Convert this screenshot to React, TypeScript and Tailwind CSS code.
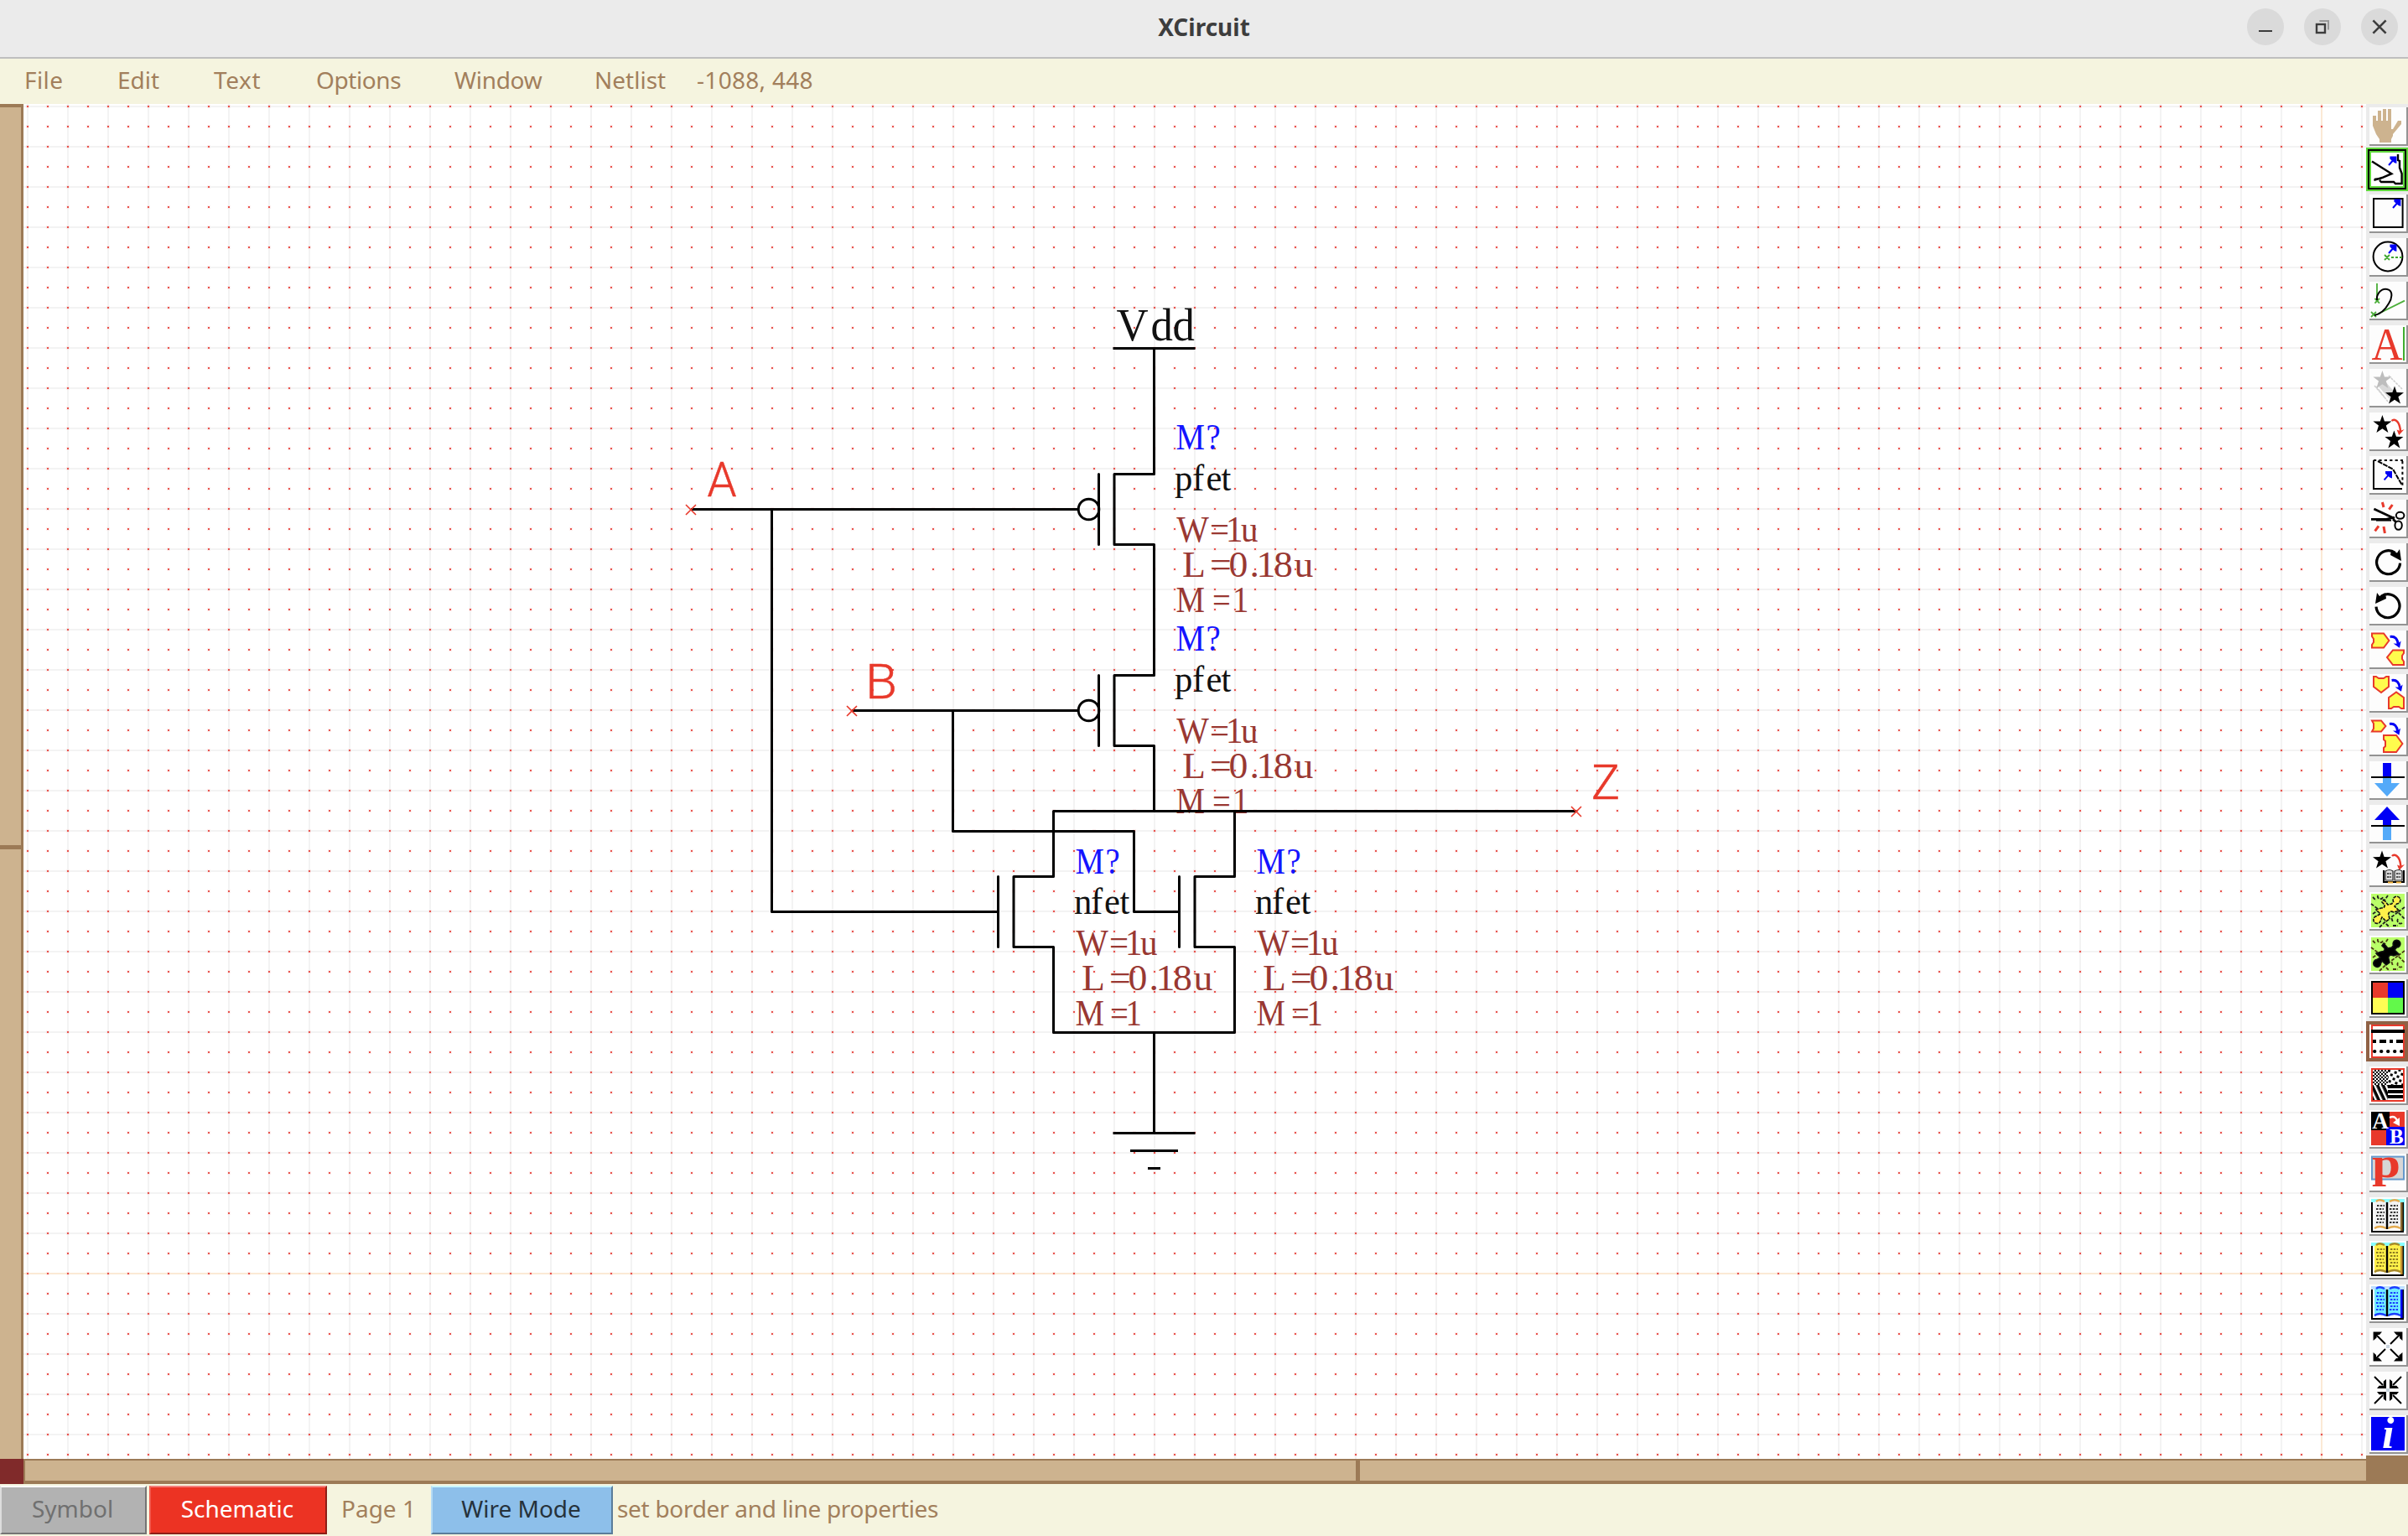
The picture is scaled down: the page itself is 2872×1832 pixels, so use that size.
import type { ReactNode } from "react";

const SERIF = "'Liberation Serif', serif";
const BLACK = "#000";
const BLUE = "#1414ff";
const RED = "#e8392b";
const RUST = "#993832";

/* ---------- schematic canvas ---------- */

type LabelProps = { text: string; xs: number[]; y: number; color: string; size?: number; squeeze?: number };

function Label({ text, xs, y, color, size = 44, squeeze = 0.93 }: LabelProps) {
  return (
    <text
      transform={`scale(${squeeze} 1)`}
      x={xs.map((v) => (v / squeeze).toFixed(1)).join(" ")}
      y={y}
      fontSize={size}
      fontFamily={SERIF}
      fill={color}
    >
      {text}
    </text>
  );
}

type FetProps = { x: number; y: number; kind: "p" | "n" };

function Fet({ x, y, kind }: FetProps) {
  const p = kind === "p";
  const at = (...v: number[]) => v.map((n) => x + n);
  return (
    <g>
      <g fill="none" stroke={BLACK} strokeWidth="3" strokeLinejoin="round" strokeLinecap="round">
        <path d={`M${x} ${y - 42}h-47.5v84h47.5M${x - 66} ${y - 42}v84`} />
        {p && <circle cx={x - 78} cy={y} r="12.3" />}
      </g>
      <Label text="M?" xs={at(26, 62)} y={y + (p ? -71 : -45)} color={BLUE} squeeze={0.88} />
      <Label
        text={p ? "pfet" : "nfet"}
        xs={p ? at(24.6, 45.5, 62, 80) : at(24.6, 44.5, 60.5, 79)}
        y={y + (p ? -22.5 : 3)}
        color="#111"
        squeeze={0.97}
      />
      <Label text="W=1u" xs={at(26.7, 66.500, 85.5, 103.5)} y={y + (p ? 39 : 51.5)} color={RUST} />
      <Label
        text="L =0.18u"
        xs={at(33.5, 57, 66.500, 89, 114, 122, 142.5, 167)}
        y={y + (p ? 81 : 93.5)}
        color={RUST}
        squeeze={1.04}
      />
      <Label
        text="M=1"
        xs={p ? at(26, 69.5, 93.5) : at(26, 67.5, 86)}
        y={y + (p ? 123 : 136)}
        color={RUST}
        squeeze={0.88}
      />
    </g>
  );
}

function Pin({ x, y, name, tx, ty, w }: { x: number; y: number; name: string; tx: number; ty: number; w: number }) {
  return (
    <g>
      <path d={`M${x - 6} ${y - 6}l12 12m0 -12l-12 12`} stroke={RED} strokeWidth="1.6" />
      <text x={tx} y={ty} fontSize="57" fontWeight="300" fontFamily="Roboto, sans-serif" fill={RED} stroke={RED} strokeWidth="0.5" textLength={w} lengthAdjust="spacingAndGlyphs">
        {name}
      </text>
    </g>
  );
}

function Schematic() {
  return (
    <svg className="block h-[1616px] w-[2794px] bg-white" viewBox="28 124 2794 1616">
      <defs>
        <pattern id="lines" x="32" y="126" width="48" height="48" patternUnits="userSpaceOnUse">
          <path d="M0 0h48v2h-48zM0 0h2v48h-2z" fill="#f3f3f3" />
        </pattern>
        <pattern id="dots" x="31" y="125" width="24" height="24" patternUnits="userSpaceOnUse">
          <rect width="4" height="4" fill="#f6b0ad" fillOpacity="0.2" />
          <rect x="1" y="1" width="2" height="2" fill="#e8544e" />
        </pattern>
      </defs>
      <rect x="28" y="124" width="2794" height="1616" fill="url(#lines)" />
      <path d="M2768 124h2v1616h-2zM28 1518h2794v2h-2794z" fill="#fbe9d5" />
      <rect x="28" y="124" width="2794" height="1616" fill="url(#dots)" />

      <Fet x={1376.5} y={607.5} kind="p" />
      <Fet x={1376.5} y={847.5} kind="p" />
      <Fet x={1256.5} y={1087.5} kind="n" />
      <Fet x={1472.5} y={1087.5} kind="n" />

      <g fill="none" stroke={BLACK} strokeWidth="3" strokeLinejoin="round">
        <path d="M1327.500 415.500h98M1376.500 415.500v150M1376.500 649.500v156M1376.500 889.500v78" />
        <path d="M824 607.500h462M920.500 607.500v480h270" />
        <path d="M1016 847.500h270M1136.500 847.500v144h216v96h54" />
        <path d="M1880 967.500h-623.500v78M1472.500 967.500v78" />
        <path d="M1256.500 1129.500v102h216v-102M1376.500 1231.500v120" />
        <path d="M1327.500 1351.500h98M1348 1372.500h57M1369 1393.500h15" />
      </g>
      <Label text="Vdd" xs={[1331.5, 1372.5, 1398.5]} y={406.5} size={55} color="#111" squeeze={0.96} />
      <Pin x={824} y={608} name="A" tx={843.5} ty={592} w={35} />
      <Pin x={1016} y={848} name="B" tx={1032} ty={832.5} w={38} />
      <Pin x={1880} y={968} name="Z" tx={1898} ty={952.5} w={34} />
    </svg>
  );
}

/* ---------- toolbar icons, drawn on a 20 x 20 grid ---------- */

const STAR = "M0 -5.500L1.300 -1.800L5.500 -1.700L2.200 .8L3.500 5L0 2.600L-3.500 5L-2.200 .8L-5.500 -1.700L-1.300 -1.800Z";

function Star({ x, y, fill = BLACK }: { x: number; y: number; fill?: string }) {
  return <path d={STAR} transform={`translate(${x} ${y})`} fill={fill} />;
}

function Arrow({ x, y }: { x: number; y: number }) {
  return (
    <g transform={`translate(${x} ${y})`}>
      <path d="M0 0l-4 4.500" stroke="#0000f5" strokeWidth="1" />
      <path d="M.7 -.7v4.200l-1.400 -.5l-2.600 -2.300v-1.400z" fill="#0000f5" />
    </g>
  );
}

function Swoop({ x, y, color }: { x: number; y: number; color: string }) {
  return (
    <g transform={`translate(${x} ${y})`}>
      <path d="M0 .5C3 0 4.500 2 4.800 5" stroke={color} strokeWidth="1.500" fill="none" />
      <path d="M2 4.500L5.700 7.200L6.500 3L4.700 4.700Z" fill={color} />
    </g>
  );
}

function RedSwoop({ x, y }: { x: number; y: number }) {
  return (
    <g transform={`translate(${x} ${y})`}>
      <path d="M0 1C1 -.2 4.500 0 5.200 7" stroke={RED} strokeWidth="1.200" fill="none" />
      <path d="M3 6.300L4.300 9.500L7.500 6L5 7Z" fill={RED} />
    </g>
  );
}

const TAG = { fill: "#fffb4d", stroke: RED, strokeWidth: 1 };

function Puzzle({ fill, dark }: { fill: string; dark?: boolean }) {
  return (
    <g>
      <rect width="20" height="20" fill="#baff69" />
      <path
        d="M0 6l4 3M1 12l3 -2M5 20l3 -3l3 3M20 8l-4 3l4 4M16 11l-4 3l1 3M16 15a1.800 1.800 0 1 0 3 2M4 1a1.500 1.500 0 1 0 3 1M10 1l-2 3M1 2l2 2M13 19l3 0"
        fill="none"
        stroke={dark ? "#4a3a14" : "#222"}
        strokeWidth=".9"
        strokeDasharray="2 .8"
      />
      <path
        d="M7.500 3.500L10 6.500L12.300 6L13.300 4.800A2.200 2.200 0 1 1 15.300 6L14 7.500L16.500 10L13.500 11Q11 9.800 10.300 12L11 15L9 16.500L6.500 14L5.800 15.500A2.200 2.200 0 1 1 3.300 13.300L5.500 12L3 9.500L6 8.500Q8.500 8.500 8 6.500L6.500 5Z"
        fill={fill}
        stroke="#111"
        strokeWidth=".8"
        strokeDasharray={dark ? undefined : "2 .5"}
      />
    </g>
  );
}

function Book({ page, ink, rim, cover, edge }: { page: string; ink: string; rim: string; cover: string; edge: string }) {
  return (
    <g>
      <rect x="0" y="0" width="20" height="2" fill={rim} />
      <rect x="18" y="1" width="2" height="18" fill={rim} />
      <path d="M.5 2v17.500h18.500v-17.500" fill="#fff" stroke={BLACK} />
      <path d="M17.500 2h1.300v17h-1.300z" fill={edge} />
      <path d="M2 2Q5 -.5 9 2V18Q5 16 2 18ZM10 2Q14 -.5 17.500 2V18Q14 16 10 18Z" fill={page} />
      <path d="M2 17.500Q5 15.500 9 17.500M10 17.500Q14 15.500 17.500 17.500M3 1.500Q5 -.2 8 1.500M11 1.500Q14 -.2 17 1.500" fill="none" stroke={cover} strokeWidth="1.200" />
      <path d="M9.500 2v16" stroke={BLACK} strokeWidth="1.200" />
      <path
        d="M3.500 4h4.500M3 6h4.500M3.500 8h4.500M3 10h4.500M3.500 12h4.500M3 14h4.500M11.500 4h4.500M11 6h5M11.500 8h4.500M11 10h5M11.500 12h4.500M11 14h5"
        stroke={ink}
        strokeWidth="1"
        strokeDasharray="1.200 .7"
      />
      <path d="M1 19.500h7M11 19.500h7" stroke={BLACK} strokeWidth="1" />
    </g>
  );
}

const ZOOM_ARM_OUT = "M-1.500 -1.500L-7 -7";
const ZOOM_HEAD_OUT = "M-8.700 -8.700h5.200l-1.500 1.700h-1.700v1.700l-2 1.800z";
const ZOOM_ARM_IN = "M-8 -8L-3 -3";
const ZOOM_HEAD_IN = "M-1 -1v-5.500l-1.600 1.300v2.600h-2.600l-1.300 1.600z";

function Spokes({ arm, head }: { arm: string; head: string }) {
  return (
    <g>
      {[0, 90, 180, 270].map((a) => (
        <g key={a} transform={`translate(10 10) rotate(${a})`}>
          <path d={arm} stroke={BLACK} strokeWidth="1" />
          <path d={head} fill={BLACK} />
        </g>
      ))}
      <rect x="9" y="9" width="2" height="2" fill="#c9d4de" />
    </g>
  );
}

const line = { fill: "none", stroke: BLACK, strokeWidth: 1 };

const ICONS: { id: string; art: ReactNode }[] = [
  { id: "pan", art: <path d="M1 4H3V7H4V1H6V7H7V0H9V7H10V0H12V12H13L16 7H18V9L13 15V16L12 18V20H5V18L3 15L1 10Z" fill="#cdb38f" /> },
  {
    id: "wire",
    art: (
      <g>
        <path d="M1 5.200L12.700 12.600L7 15L2.200 16.400M2.500 16l4 -.6M5.500 16.500l1 1H14l1 1H18.800V12.500L17.500 9V5L16.500 4.500V1" {...line} strokeWidth="1.200" />
        <Arrow x={15} y={3} />
      </g>
    ),
  },
  { id: "box", art: <g><rect x="1.500" y="1.500" width="17.300" height="17" {...line} /><Arrow x={17} y={2.500} /></g> },
  {
    id: "arc",
    art: (
      <g>
        <circle cx="10" cy="10" r="8.700" {...line} />
        <path d="M8 9l3 3m0 -3l-3 3M12 10.500h1.500m1 0h1.500m1 0h1.500" stroke="#3fa62f" strokeWidth=".9" />
        <Arrow x={14.5} y={3.5} />
      </g>
    ),
  },
  {
    id: "spline",
    art: (
      <g>
        <path d="M3.500 0V8M2.200 9l2.800 2.800m0 -2.800l-2.800 2.800M0 17l3 3m0 -3l-3 3M3.500 18.500L20 10.300" stroke="#4caf3a" strokeWidth=".9" fill="none" />
        <path d="M3.500 10V8C5 3.500 8 2.800 10.500 3.800C13 5 12.500 9 10.500 12C8.500 15.500 6 18.300 2 19" {...line} />
      </g>
    ),
  },
  {
    id: "text",
    art: (
      <g>
        <text x=".3" y="19.500" fontFamily={SERIF} fontSize="27.500" fill={RED} textLength="18.500" lengthAdjust="spacingAndGlyphs">A</text>
        <path d="M19.500 0V20" stroke="#3fae2f" strokeWidth="1" />
      </g>
    ),
  },
  {
    id: "copy",
    art: (
      <g>
        <path d="M10.500 3l8 8M3 9.500l7 9M2 9l6 7" stroke="#cfcfcf" strokeWidth=".8" strokeDasharray="1.500 .5" />
        <path d="M8 6L15 14L11 17L4 9Z" fill="#d9d9d9" />
        <Star x={6.7} y={5.5} fill="#bdbdbd" />
        <Star x={14} y={14.8} />
      </g>
    ),
  },
  { id: "move", art: <g><Star x={6.7} y={6} /><Star x={13.7} y={15.200} /><RedSwoop x={12.3} y={3} /></g> },
  {
    id: "edit",
    art: (
      <g>
        <path d="M1.500 1.500V18.500H18.500" {...line} />
        <path d="M1.500 1.500H19M18.700 2V18" {...line} strokeDasharray="1.600 1.600" />
        <path d="M4 2L13 6.800L18.300 16" {...line} strokeDasharray="3 .5" />
        <Arrow x={11.8} y={8.7} />
      </g>
    ),
  },
  {
    id: "cut",
    art: (
      <g>
        <path d="M1.700 4.500L14 10.300M0 10.700H9L14 9.500M13 10.500l2 2" {...line} strokeWidth="1.400" />
        <path d="M3 11.300h9" stroke={BLACK} strokeWidth="1" />
        <ellipse cx="17.300" cy="8.400" rx="2.400" ry="2" {...line} />
        <ellipse cx="16.300" cy="14.300" rx="2.100" ry="2.600" {...line} />
        <path d="M6.700 .5l.8 3M12.700 2l-2 2.800M4.500 14.700l-2.200 3M7.500 15l.7 4" stroke={RED} strokeWidth="1.500" />
      </g>
    ),
  },
  {
    id: "rotate-cw",
    art: (
      <g>
        <path d="M17.300 10.800A7 7 0 1 1 14.300 4.600" {...line} strokeWidth="1.600" />
        <path d="M11.500 6L18 9.500L17 2.500L15.500 4.700L12 3Z" fill={BLACK} />
      </g>
    ),
  },
  {
    id: "rotate-ccw",
    art: (
      <g>
        <path d="M3 10.800A7 7 0 1 0 6 4.600" {...line} strokeWidth="1.600" />
        <path d="M9 6L2.500 9L3.500 2.500L5 4.500L8.500 2.600Z" fill={BLACK} />
      </g>
    ),
  },
  {
    id: "flip-x",
    art: (
      <g>
        <path d="M.5 .7H7.500L10.700 5L7.500 9.300H.5V7.500L1.500 6V4L.5 2.500Z" {...TAG} />
        <path d="M19.500 10.700H13L9.500 15L13 19.500H19.500V17.500L18.500 16V14L19.500 12.500Z" {...TAG} />
        <Swoop x={11.3} y={2.2} color="#0000f5" />
      </g>
    ),
  },
  {
    id: "flip-y",
    art: (
      <g>
        <path d="M1.500 .5H3L4.500 1.500H7.500L9 .5H10.500V6.500L6 10L1.500 6.500Z" {...TAG} />
        <path d="M10.500 19.500H12L13.500 18.500H16.500L18 19.500H19.500V13L15 9.700L10.500 13Z" {...TAG} />
        <Swoop x={12.3} y={2.2} color="#0000f5" />
      </g>
    ),
  },
  {
    id: "rescale",
    art: (
      <g>
        <path d="M.5 .7H6L8.700 4L6 7.300H.5L1.500 5.500V2.500Z" {...TAG} />
        <path d="M7.500 9.500H15L18.700 14.500L15 19.500H7.500V17L8.500 16V13L7.500 12Z" {...TAG} />
        <Swoop x={11} y={2.2} color="#0000f5" />
      </g>
    ),
  },
  {
    id: "push",
    art: (
      <g>
        <path d="M7 0h5v8h-5z" fill="#0000f5" />
        <path d="M7 9h5v3h5L9.500 20L2 12h5z" fill="#54aaf9" />
        <path d="M0 8.500H20" stroke={BLACK} />
      </g>
    ),
  },
  {
    id: "pop",
    art: (
      <g>
        <path d="M9.500 0L17 8H12V11H7V8H2Z" fill="#0000f5" />
        <path d="M7 12h5v8h-5z" fill="#54aaf9" />
        <path d="M0 11.500H20" stroke={BLACK} />
      </g>
    ),
  },
  {
    id: "make-object",
    art: (
      <g>
        <Star x={6.5} y={5.8} />
        <RedSwoop x={12.5} y={2.5} />
        <path d="M7.500 12v7h12v-7" fill="#fff" stroke={BLACK} />
        <path d="M8.500 12.500Q11 11 13 12.500V18H8.500ZM14 12.500Q16.500 11 18.500 12.500V18H14Z" fill="#ddd" stroke="#222" strokeWidth=".6" />
        <path d="M9.500 14h2.500M9.500 16h2.500M15 14h2.500M15 16h2.500" stroke="#222" strokeWidth=".7" strokeDasharray="1.300 .4" />
        <path d="M10 19.300h3M15 19.300h3" stroke="#f0b23c" strokeWidth="1" />
      </g>
    ),
  },
  { id: "join", art: <Puzzle fill="#fff04a" /> },
  { id: "unjoin", art: <Puzzle fill="#000" dark /> },
  {
    id: "colors",
    art: (
      <g>
        <rect width="20" height="20" fill={BLACK} />
        <path d="M1 1h9v9h-9z" fill={RED} />
        <path d="M10 1h9v9h-9z" fill="#0000f5" />
        <path d="M1 10h9v9h-9z" fill="#fffd54" />
        <path d="M10 10h9v9h-9z" fill="#62f94a" />
      </g>
    ),
  },
  {
    id: "border",
    art: (
      <g>
        <rect x=".5" y=".5" width="19" height="19" fill="#fff" stroke={RED} />
        <path d="M0 4H20" stroke={BLACK} strokeWidth="2" />
        <path d="M1 10H19" stroke={BLACK} strokeWidth="2" strokeDasharray="2 2 4 2" />
        <path d="M2 16H20" stroke={BLACK} strokeWidth="2" strokeLinecap="round" strokeDasharray=".2 3.800" />
      </g>
    ),
  },
  {
    id: "fill",
    art: (
      <g>
        <defs>
          <pattern id="check" width="2" height="2" patternUnits="userSpaceOnUse"><path d="M0 0h1v1h-1zM1 1h1v1h-1z" fill="#fff" /></pattern>
          <pattern id="spots" width="4" height="4" patternUnits="userSpaceOnUse" patternTransform="rotate(15)"><path d="M0 0h1.500v1.500h-1.500zM2 2h1.500v1.500h-1.500z" fill={BLACK} /></pattern>
          <pattern id="slant" width="3" height="4" patternUnits="userSpaceOnUse" patternTransform="rotate(-25)"><path d="M0 0h1.200v4h-1.200z" fill="#fff" /></pattern>
        </defs>
        <rect width="20" height="20" fill={RED} />
        <rect x="1" y="1" width="18" height="18" fill={BLACK} />
        <rect x="1" y="1" width="9" height="9" fill="url(#check)" />
        <rect x="10" y="1" width="9" height="9" fill="#fff" />
        <rect x="10" y="1" width="9" height="9" fill="url(#spots)" />
        <rect x="1" y="10" width="9" height="9" fill="url(#slant)" />
        <path d="M10 12.500h9M10 15.500h9M10 18.500h9" stroke="#fff" strokeWidth="1" />
      </g>
    ),
  },
  {
    id: "parameterize",
    art: (
      <g>
        <rect width="20" height="20" fill={RED} />
        <rect width="11" height="11" fill={BLACK} />
        <rect x="9" y="9" width="11" height="11" fill="#0000f5" />
        <text x=".6" y="9.800" fontFamily={SERIF} fontWeight="700" fontSize="13.500" fill="#fff">A</text>
        <text x="11" y="19" fontFamily={SERIF} fontWeight="700" fontSize="12.500" fill="#fff">B</text>
        <path d="M11 3.500C14 2 15 4 16 6" stroke="#fff" strokeWidth="1.200" fill="none" />
        <path d="M13 6.500L17 8.500V3.500Z" fill="#fff" />
      </g>
    ),
  },
  {
    id: "parameter",
    art: (
      <g>
        <rect x=".5" y=".8" width="19" height="13.500" fill="#d6d6d6" stroke="#6699cc" />
        <text x=".5" y="13" fontFamily={SERIF} fontWeight="700" fontSize="25" fill={RED} textLength="17" lengthAdjust="spacingAndGlyphs">p</text>
      </g>
    ),
  },
  { id: "library", art: <Book page="#f2f2f2" ink="#333" rim="#8ff" cover="#e3aa4f" edge="#8a6a30" /> },
  { id: "library-directory", art: <Book page="#fff04a" ink="#8a7a20" rim="#8ff" cover="#a88a2a" edge="#c79330" /> },
  { id: "page-directory", art: <Book page="#70ebff" ink="#1a3cff" rim="#bfe0ff" cover="#1a3cff" edge="#0000f5" /> },
  { id: "zoom-in", art: <Spokes arm={ZOOM_ARM_OUT} head={ZOOM_HEAD_OUT} /> },
  { id: "zoom-out", art: <Spokes arm={ZOOM_ARM_IN} head={ZOOM_HEAD_IN} /> },
  {
    id: "info",
    art: (
      <g>
        <rect width="20" height="20" fill="#0000f5" />
        <text x="6.500" y="18.300" fontFamily={SERIF} fontStyle="italic" fontWeight="700" fontSize="26" fill="#fff">i</text>
      </g>
    ),
  },
];

function ToolButton({ id, art }: { id: string; art: ReactNode }) {
  const icon = (
    <svg viewBox="0 0 20 20" className="block size-10 shrink-0 overflow-visible">
      {art}
    </svg>
  );
  if (id === "wire") {
    return (
      <div className="h-[52px] w-[50px] border-2 border-[#5fd83c] bg-black p-[2px]">
        <div className="flex size-full items-center justify-center border-2 border-[#5fd83c] bg-white">{icon}</div>
      </div>
    );
  }
  if (id === "border") {
    return (
      <div className="h-[52px] w-[50px] bg-[#e8e8e8] pt-[2px] pb-[2px]">
        <div className="flex size-full items-center justify-center border-4 border-[#8f6145] bg-white pl-[2px]">{icon}</div>
      </div>
    );
  }
  return (
    <div className="h-[52px] w-[50px] bg-[#ebebeb] pt-1 pb-[2px] pl-1">
      <div className="size-full border-r-2 border-b-2 border-[#939393] bg-[#fdfdfd] pt-[2px] pl-[2px]">{icon}</div>
    </div>
  );
}

/* ---------- window chrome ---------- */

function RoundButton({ children }: { children: ReactNode }) {
  return (
    <div className="flex size-11 items-center justify-center rounded-full bg-[#dadada]">
      <svg viewBox="0 0 22 22" className="size-[44px]" fill="none" stroke="#3d3d3d">
        {children}
      </svg>
    </div>
  );
}

function TitleBar() {
  return (
    <header className="relative flex h-[70px] items-start justify-center border-b-2 border-[#bfbfbf] bg-[#ebebeb]">
      <h1 className="mt-[14px] text-[28px] leading-[36px] font-bold text-[#3d3d3d]">XCircuit</h1>
      <div className="absolute top-[10px] right-3 flex gap-6">
        <RoundButton>
          <path d="M7 13.500h8" />
        </RoundButton>
        <RoundButton>
          <path d="M9.200 7.500h5.300v5.300" stroke="#999" />
          <rect x="7.500" y="9.500" width="5" height="5" strokeWidth="1.200" />
        </RoundButton>
        <RoundButton>
          <path d="M7.200 7.200l7.600 7.600m0 -7.600l-7.600 7.600" strokeWidth="1.300" />
        </RoundButton>
      </div>
    </header>
  );
}

function MenuBar() {
  return (
    <nav className="flex h-[54px] bg-[#f5f4df] pl-[29px] text-[28px] leading-[50px] text-[#a27f5c]">
      <span className="w-[111px] tracking-[0.4px]">File</span>
      <span className="w-[115px]">Edit</span>
      <span className="w-[122px] tracking-[0.6px]">Text</span>
      <span className="w-[165px] tracking-[-0.4px]">Options</span>
      <span className="w-[167px] tracking-[-0.3px]">Window</span>
      <span className="w-[122px]">Netlist</span>
      <span className="tracking-[0.3px]">-1088, 448</span>
    </nav>
  );
}

function StatusBar() {
  return (
    <footer className="flex h-[62px] items-start bg-[#f5f4df] pt-[2px] text-[28px] leading-[50px] text-[#a27f5c]">
      <div className="h-[58px] w-[175px] border-2 border-t-white border-r-[#747474] border-b-[#747474] border-l-[#ddd] bg-[#b2b2b2] pr-[2px] text-center text-[#707070]">
        Symbol
      </div>
      <div className="ml-[3px] h-[58px] w-[212px] border-2 border-t-[#f4807a] border-r-[#8d1e16] border-b-[#8d1e16] border-l-[#f25a4e] bg-[#ec3323] pr-[2px] text-center text-white">
        Schematic
      </div>
      <div className="w-[124px] pt-[2px] pl-[17px]">Page 1</div>
      <div className="h-[58px] w-[217px] border-2 border-t-[#c9f6ff] border-r-[#5a7c9a] border-b-[#5a7c9a] border-l-[#b6dcf5] bg-[#8dbfea] pr-[2px] text-center text-[#26323c]">
        Wire Mode
      </div>
      <div className="pt-[2px] pl-[5px] tracking-[-0.3px]">set border and line properties</div>
    </footer>
  );
}

export default function App() {
  return (
    <div className="flex h-[1832px] w-[2872px] flex-col overflow-hidden bg-white font-['Noto_Sans',sans-serif]">
      <TitleBar />
      <MenuBar />
      <main className="flex h-[1646px]">
        <div className="flex w-[2822px] flex-col">
          <div className="flex h-[1616px]">
            <div className="flex w-7 flex-col border-t-4 border-r-[3px] border-[#9c7a56] bg-[#cdb38f] pt-[880px]">
              <div className="h-[5px] bg-[#9c7a56]" />
            </div>
            <Schematic />
          </div>
          <div className="flex h-[30px]">
            <div className="w-7 bg-[#802a2a]" />
            <div className="flex flex-1 border-t-2 border-b-4 border-l-2 border-[#9c7a56] bg-[#cdb38f] pl-[1587px]">
              <div className="w-[5px] bg-[#9c7a56]" />
            </div>
          </div>
        </div>
        <aside className="flex w-[50px] flex-col bg-[#9c7a56]">
          {ICONS.map((i) => (
            <ToolButton key={i.id} {...i} />
          ))}
        </aside>
      </main>
      <StatusBar />
    </div>
  );
}
